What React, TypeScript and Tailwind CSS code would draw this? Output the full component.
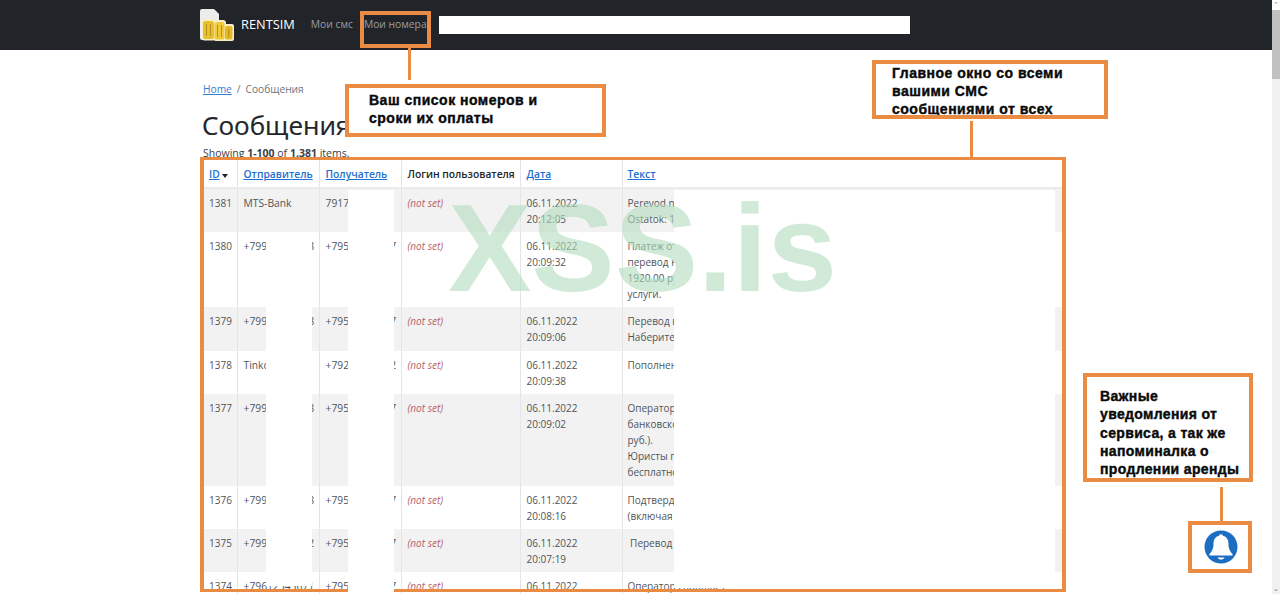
const rows = [
  { id: 1381, from: "MTS-Bank", to: "79171234567", date: "06.11.2022", time: "20:12:05", h: "h-[44px]", text: ["Perevod na summu 1920 RUB", "Ostatok: 12450 RUB"] },
  { id: 1380, from: "+79912345678", to: "+79512345677", date: "06.11.2022", time: "20:09:32", h: "h-[75px]", text: ["Платеж от клиента принят", "перевод на сумму", "1920.00 руб за", "услуги."] },
  { id: 1379, from: "+79912345678", to: "+79512345677", date: "06.11.2022", time: "20:09:06", h: "h-[44px]", text: ["Перевод выполнен", "Наберите номер"] },
  { id: 1378, from: "Tinkoff", to: "+79212345672", date: "06.11.2022", time: "20:09:38", h: "h-[43px]", text: ["Пополнение счета"] },
  { id: 1377, from: "+79912345678", to: "+79512345677", date: "06.11.2022", time: "20:09:02", h: "h-[92px]", text: ["Оператор сообщает", "банковского счета", "руб.).", "Юристы помогут", "бесплатно"] },
  { id: 1376, from: "+79912345678", to: "+79512345677", date: "06.11.2022", time: "20:08:16", h: "h-[43px]", text: ["Подтвердите перевод", "(включая комиссию)"] },
  { id: 1375, from: "+79912345672", to: "+79512345677", date: "06.11.2022", time: "20:07:19", h: "h-[43px]", text: ["\u00a0Перевод выполнен"] },
  { id: 1374, from: "+79612345671", to: "+79512345677", date: "06.11.2022", time: "20:07:01", h: "h-[43px]", text: ["Оператор сообщает"] },
];

function Logo() {
  return (
    <svg width="34" height="34" viewBox="0 0 34 34" className="shrink-0">
      <path d="M0 3a2 2 0 0 1 2-2h12l5 5v26H2a2 2 0 0 1-2-2z" fill="#ececec" />
      <rect x="1.500" y="11" width="14" height="21.500" rx="3" fill="#f6efc8" />
      <rect x="13" y="12" width="13" height="21" rx="3" fill="#f6efc8" />
      <rect x="23" y="16" width="11" height="17" rx="2" fill="#f6efc8" />
      <rect x="3" y="13" width="11" height="18" rx="2.500" fill="#e8bf2e" />
      <rect x="14.500" y="14" width="10" height="17.500" rx="2.500" fill="#f0ca38" />
      <rect x="25" y="18" width="7.500" height="13.500" rx="2" fill="#e6b828" />
      <path d="M6.500 16v12M10.500 16v12M17.500 17v12M21.500 17v12M28.700 21v8" stroke="#b08a1c" strokeWidth="0.9" fill="none" />
    </svg>
  );
}

function Bell() {
  return (
    <svg width="34" height="34" viewBox="0 0 34 34">
      <circle cx="17" cy="17" r="16.500" fill="#1b6ec2" />
      <circle cx="17" cy="6.500" r="2.200" fill="#fff" />
      <path d="M17 5.500c-5 0-7.500 3.500-7.500 8.500 0 5-1.500 7-4 10v1.500h23V24c-2.500-3-4-5-4-10 0-5-2.500-8.500-7.500-8.500z" fill="#fff" />
      <path d="M13.500 27.500h7c-.8 1.500-2 2-3.500 2s-2.700-.5-3.500-2z" fill="#fff" />
    </svg>
  );
}

function Note({ className, children }: { className: string; children: React.ReactNode }) {
  return (
    <div className={`absolute z-30 overflow-hidden border-4 border-[#e98b42] bg-white font-['Liberation_Sans',sans-serif] text-[14px] font-bold tracking-[0.5px] text-[#0a0a0a] [-webkit-text-stroke:0.4px_#0a0a0a] ${className}`}>
      {children}
    </div>
  );
}

export default function App() {
  return (
    <div className="flex h-[594px] w-full overflow-hidden bg-white font-['Open_Sans',sans-serif] text-[10px] text-[#50555a]">
      <div className="relative min-w-0 flex-1 overflow-hidden">
        <nav className="flex h-[50px] items-center bg-[#212529] pl-[200px]">
          <Logo />
          <span className="ml-[7px] text-[12.800px] text-white">RENTSIM</span>
          <span className="ml-[16px] text-[10.300px] text-[#9a9da0]">Мои смс</span>
          <span className="ml-[11px] text-[10.300px] text-[#9a9da0]">Мои номера</span>
          <div className="ml-[12px] h-[18px] w-[471px] bg-white" />
        </nav>

        <main className="pl-[202px]">
          <div className="flex gap-[5px] pt-[32px] pl-px text-[10.200px] leading-[15px] text-[#6c757d]">
            <span className="text-[#2f7fd6] underline">Home</span>
            <span>/</span>
            <span>Сообщения</span>
          </div>
          <h1 className="mt-[10px] text-[26px] leading-[36px] font-normal text-[#212529] [-webkit-text-stroke:0.2px_#212529]">Сообщения</h1>
          <p className="mt-[2px] pl-px text-[10.500px] leading-[16px] text-[#3c4044]">
            Showing <b>1-100</b> of <b>1.381</b> items.
          </p>

          <table className="mt-[-1px] w-[862px] table-fixed border-collapse">
            <colgroup>
              <col className="w-[35px]" />
              <col className="w-[82px]" />
              <col className="w-[82px]" />
              <col className="w-[119px]" />
              <col className="w-[102px]" />
              <col />
            </colgroup>
            <thead>
              <tr className="h-[28px] border-b-2 border-[#e9ecef] text-left text-[10.300px]">
                <th className="border-r border-[#e3e6e9] pt-[3px] pl-[7px] font-semibold whitespace-nowrap">
                  <span className="text-[#1d6fd0] underline">ID</span>
                  <span className="ml-[2px] inline-block border-x-[3.500px] border-t-[4px] border-x-transparent border-t-[#212529] align-middle" />
                </th>
                <th className="border-r border-[#e3e6e9] px-[6px] pt-[3px] font-semibold text-[#1d6fd0] underline">Отправитель</th>
                <th className="border-r border-[#e3e6e9] px-[6px] pt-[3px] font-semibold text-[#1d6fd0] underline">Получатель</th>
                <th className="border-r border-[#e3e6e9] px-[6px] pt-[3px] font-semibold whitespace-nowrap text-[#212529]">Логин пользователя</th>
                <th className="border-r border-[#e3e6e9] px-[6px] pt-[3px] font-semibold text-[#1d6fd0] underline">Дата</th>
                <th className="px-[5px] pt-[3px] font-semibold text-[#1d6fd0] underline">Текст</th>
              </tr>
            </thead>
            <tbody>
              {rows.map((row, i) => (
                <tr key={row.id} className={`${row.h} align-top leading-[16px] ${i % 2 === 0 ? "bg-[#f2f2f2]" : "bg-white"}`}>
                  <td className="border-r border-[#e3e6e9] pt-[6px] pl-[7px]">{row.id}</td>
                  <td className="border-r border-[#e3e6e9] px-[6px] pt-[6px] text-[10.300px] whitespace-nowrap">{row.from}</td>
                  <td className="border-r border-[#e3e6e9] px-[6px] pt-[6px] text-[10.300px] whitespace-nowrap">{row.to}</td>
                  <td className="border-r border-[#e3e6e9] px-[6px] pt-[6px] text-[#b5616b] italic">(not set)</td>
                  <td className="border-r border-[#e3e6e9] px-[6px] pt-[6px]">
                    {row.date}
                    <br />
                    {row.time}
                  </td>
                  <td className="px-[5px] pt-[6px] whitespace-nowrap">
                    {row.text.map((line) => (
                      <div key={line}>{line}</div>
                    ))}
                  </td>
                </tr>
              ))}
            </tbody>
          </table>
        </main>

        {/* orange frames */}
        <div className="absolute top-[11px] left-[360px] z-30 h-[37px] w-[71px] border-[4px] border-[#e98b42]" />
        <div className="absolute top-[48px] left-[408px] z-30 h-[32px] w-[3px] bg-[#e98b42]" />
        <div className="absolute top-[121px] left-[970px] z-30 h-[36px] w-[3px] bg-[#e98b42]" />
        <div className="absolute top-[157px] left-[200px] z-20 h-[435px] w-[866px] border-x-4 border-y-[3px] border-[#e98b42]" />
        <div className="absolute top-[487px] left-[1220px] z-30 h-[34px] w-[3px] bg-[#e98b42]" />

        {/* white masks over the private columns */}
        <div className="absolute top-[233px] left-[266px] z-10 h-[353px] w-[46px] bg-white" />
        <div className="absolute top-[190px] left-[348px] z-20 h-[404px] w-[46px] bg-white" />
        <div className="absolute top-[190px] left-[674px] z-10 h-[398px] w-[381px] bg-white" />

        <Note className="top-[84px] left-[345px] h-[53px] w-[261px] pt-[3px] pl-[20px] leading-[18px]">
          Ваш список номеров и
          <br />
          сроки их оплаты
        </Note>
        <Note className="top-[60px] left-[872px] h-[59px] w-[236px] pl-[16px] leading-[18px]">
          Главное окно со всеми
          <br />
          вашими СМС
          <br />
          сообщениями от всех
        </Note>
        <Note className="top-[373px] left-[1083px] h-[109px] w-[170px] pt-[10px] pl-[13px] leading-[18.300px] tracking-[0.35px]">
          Важные
          <br />
          уведомления от
          <br />
          сервиса, а так же
          <br />
          напоминалка о
          <br />
          продлении аренды
        </Note>
        <div className="absolute top-[521px] left-[1188px] z-30 flex h-[52px] w-[64px] items-center justify-end border-4 border-[#e98b42] bg-white pr-[10px]">
          <Bell />
        </div>

        <div className="pointer-events-none absolute top-[180px] left-[448px] z-40 font-['Liberation_Sans',sans-serif] text-[125px] leading-[136px] font-bold whitespace-nowrap text-[#b0dcbc]/60">
          XSS.is
        </div>
      </div>

      <div className="flex w-2 shrink-0 flex-col bg-[#f1f1f1]">
        <div className="h-[10px] bg-white text-center text-[7px] leading-[10px] text-[#8a8a8a]">⌃</div>
        <div className="h-[69px] bg-[#c1c1c1]" />
        <div className="flex-1" />
        <div className="h-[10px] text-center text-[7px] leading-[10px] text-[#6a6a6a]">⌄</div>
      </div>
    </div>
  );
}
